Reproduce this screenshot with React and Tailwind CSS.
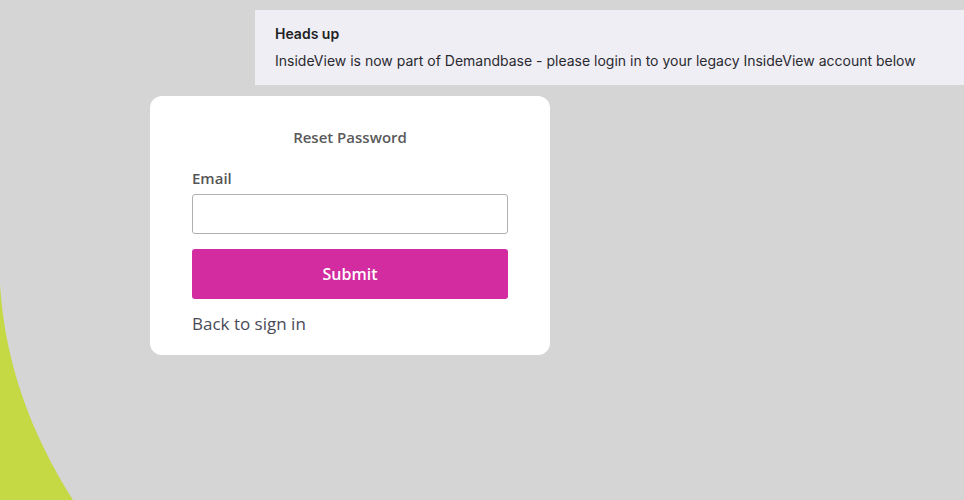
export default function App() {
  return (
    <div className="relative w-[964px] h-[500px] overflow-hidden bg-[#d5d5d5]">
      <svg className="absolute left-0 top-0" width="964" height="500" viewBox="0 0 964 500">
        <path d="M0 285 C 5 362, 30 432, 73 500 L0 500 Z" fill="#c4d944" />
      </svg>
      <div className="relative flex justify-end pt-[10px]">
        <div className="w-[709px] h-[75px] bg-[#f0eef5] pl-[20px] pt-[14px] font-['Inter',sans-serif] text-[#1f1f24]">
          <div className="text-[14px] font-semibold leading-[20px]">Heads up</div>
          <div className="text-[14px] leading-[20px] mt-[7px] text-[#2a2a30]">
            InsideView is now part of Demandbase - please login in to your legacy InsideView account below
          </div>
        </div>
      </div>
      <div className="relative ml-[150px] mt-[11px] w-[400px] h-[259px] bg-white rounded-[12px] px-[42px] pt-[31px] font-['Open_Sans',sans-serif]">
        <div className="text-center text-[15px] font-semibold text-[#5a5a5a] leading-[20px]">Reset Password</div>
        <div className="mt-[21px] text-[15px] font-semibold text-[#555] leading-[20px]">Email</div>
        <div className="mt-[6px] h-[40px] border border-[#b0b0b0] rounded-[3px]"></div>
        <button className="mt-[15px] w-full h-[50px] bg-[#d22ca0] rounded-[3px] text-white text-[16px] font-semibold">Submit</button>
        <div className="mt-[14px] text-[17px] font-medium text-[#494a59] leading-[22px]">Back to sign in</div>
      </div>
    </div>
  );
}
